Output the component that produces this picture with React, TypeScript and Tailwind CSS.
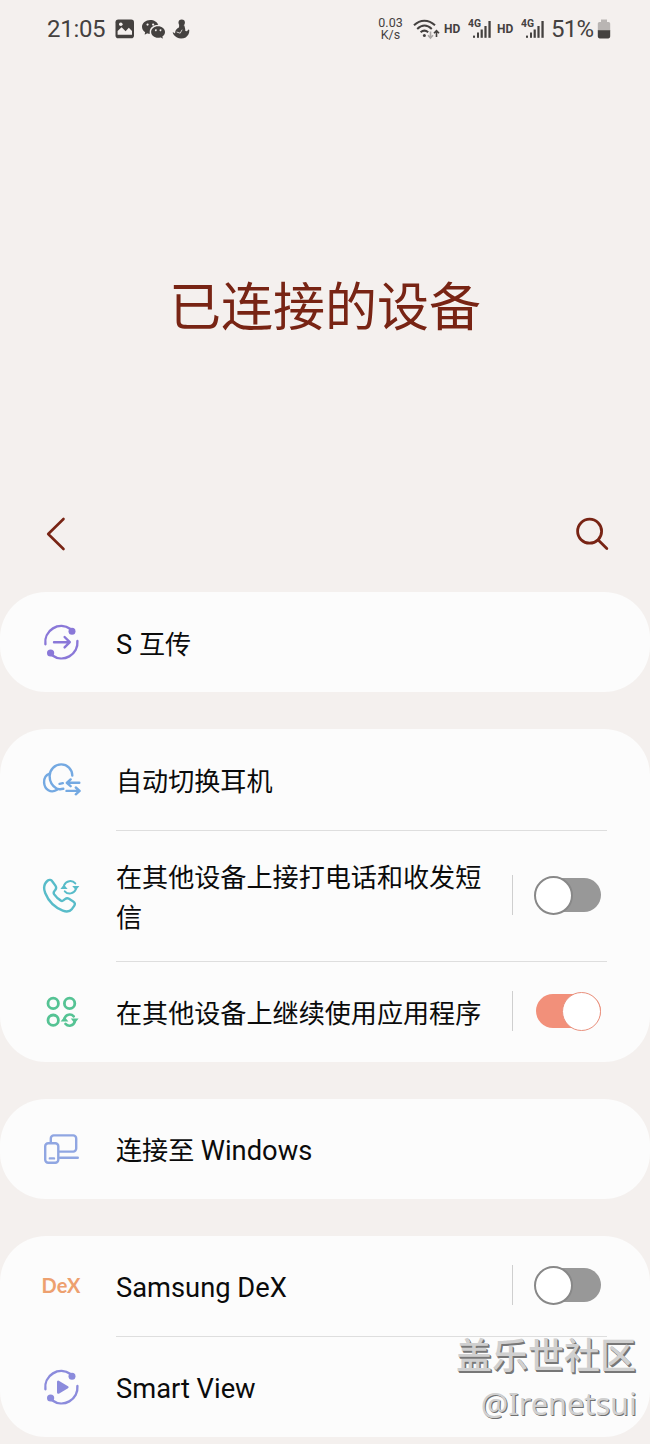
import type { ReactNode } from "react";
import { BsWechat } from "react-icons/bs";

function Icon({ color, children }: { color: string; children: ReactNode }) {
  return (
    <svg
      viewBox="0 0 40 40"
      className={`size-10 shrink-0 ${color}`}
      fill="none"
      stroke="currentColor"
      strokeWidth="2.4"
      strokeLinecap="round"
      strokeLinejoin="round"
    >
      {children}
    </svg>
  );
}

function Orbit() {
  return (
    <>
      <path d="M4.4 22.2A16 16 0 0 1 29.5 7" />
      <path d="M36.4 19A16 16 0 0 1 11 33.3" />
      <circle cx="31" cy="9.2" r="3.5" fill="currentColor" stroke="none" />
      <circle cx="9.6" cy="31" r="3.6" fill="currentColor" stroke="none" />
    </>
  );
}

const icons = {
  share: (
    <Icon color="text-[#8a78d8]">
      <Orbit />
      <path d="M13 20.2h15.5M23.6 15l5.2 5.2-5.2 5.2" />
    </Icon>
  ),
  buds: (
    <Icon color="text-[#74a9e2]">
      <path d="M31.3 15.6C31.2 9 26.3 4.4 20.2 4.4C13.8 4.4 8.6 9.6 8.6 16C8.6 21.5 11.5 26 15.5 28.6C17.6 29.9 20 29 22.3 28.8" />
      <path d="M8.6 13.6C4.8 15 2.9 18.7 3.1 22.5C3.5 29.5 9.8 33.8 16 29.8" />
      <path d="M18.6 23.9l3.2-.8M38.3 22.8H26M29.6 19.4l-3.8 3.4 3.8 3.4M25.5 30.9h12.8M34.8 27.5l3.8 3.4-3.8 3.4" />
    </Icon>
  ),
  call: (
    <Icon color="text-[#58bcc9]">
      <path d="M6.8 4.5C8.2 3.4 10.2 3.7 11.2 5.2L14.4 9.6C15.4 11 15.3 12.5 14.4 13.8L13.2 15.4C12.4 16.6 12.5 17.4 13.2 18.4C15 21 16.8 22.7 19.6 24.4C20.6 25.1 21.5 25.1 22.4 24.4L24 23.1C25.2 22.2 26.6 22 28 22.8L32.2 25.4C34 26.5 34.3 28.4 33.2 29.9L31 32.9C28.8 35.7 25.4 36 21.8 34.6C14.2 31.6 7.4 25 4.2 17C2.5 12.7 2.8 7.8 6.8 4.5Z" />
      <path d="M23.2 9.2a6.6 6.6 0 0 1 11.1-1.8M34.8 13.4a6.6 6.6 0 0 1-11 1.9" strokeWidth="2" />
      <path d="M19.4 13l3.5-4.4 3.7 4.4zM31.2 9.9l3.7 4.4 3.5-4.4z" fill="currentColor" stroke="none" />
    </Icon>
  ),
  apps: (
    <Icon color="text-[#55c394]">
      <g strokeWidth="2.8">
        <circle cx="12.2" cy="11.4" r="5.2" />
        <circle cx="28.6" cy="11.4" r="5.2" />
        <circle cx="12.2" cy="28.2" r="5.2" />
        <path d="M23.5 26.4a5.4 5.4 0 0 1 9.2-2M33.7 29.9a5.4 5.4 0 0 1-9.2 2" strokeWidth="2.6" />
      </g>
      <path d="M19.6 29.6l3.9-4.8 3.9 4.8zM29.8 26.6l3.9 4.8 3.9-4.8z" fill="currentColor" stroke="none" />
    </Icon>
  ),
  windows: (
    <Icon color="text-[#90a6e2]">
      <path d="M9.8 13V9.4a3 3 0 0 1 3-3H32.2a3 3 0 0 1 3 3V19.6a3 3 0 0 1-3 3H18.6" />
      <rect x="4.2" y="14.3" width="13.1" height="19.4" rx="3" />
      <path d="M8.8 29.4h4.2M19 28.8h17.8" />
    </Icon>
  ),
  dex: (
    <span className="mb-0.5 w-10 shrink-0 text-center font-['Lato'] text-[20px] leading-none font-bold text-[#eda06f]">
      DeX
    </span>
  ),
  view: (
    <Icon color="text-[#8b8bdc]">
      <Orbit />
      <path d="M17.2 14.8v10.8l9.2-5.4z" fill="currentColor" />
    </Icon>
  ),
};

function Toggle({ on = false }: { on?: boolean }) {
  return (
    <div className="mb-0.5 flex h-10 shrink-0 items-center border-l border-[#cfcfcf] pl-[22px]">
      <div
        className={`flex h-[34px] items-center rounded-full ${
          on ? "ml-px w-[65px] justify-end bg-[#f2907a]" : "w-[66px] bg-[#989898]"
        }`}
      >
        <div
          className={`size-[39px] shrink-0 rounded-full bg-white ${
            on ? "border-[1.5px] border-[#e9907d]" : "-ml-px border-2 border-[#888]"
          }`}
        />
      </div>
    </div>
  );
}

type RowProps = {
  icon: ReactNode;
  label: string;
  height: string;
  toggle?: "on" | "off";
};

// Latin words are set slightly larger than the Chinese characters beside them
function Label({ text }: { text: string }) {
  return text.split(/([A-Za-z][A-Za-z ]*)/).map((part, i) =>
    /[A-Za-z]/.test(part) ? (
      <span key={i} className="text-[27.3px]">
        {part}
      </span>
    ) : (
      part
    )
  );
}

function Row({ icon, label, height, toggle }: RowProps) {
  return (
    <div className={`flex items-center pr-12 pl-[41px] ${height}`}>
      {icon}
      <div
        className={`ml-[35px] w-[372px] text-[26.1px] leading-[40px] text-[#0b0b0b] ${
          /^(S |自动)/.test(label) ? "mt-[5px]" : "mt-[3px]"
        }`}
      >
        <Label text={label} />
      </div>
      {toggle && (
        <div className="ml-6">
          <Toggle on={toggle === "on"} />
        </div>
      )}
    </div>
  );
}

function Card({ children }: { children: ReactNode }) {
  return <section className="rounded-[46px] bg-[#fcfcfc]">{children}</section>;
}

function Divider() {
  return <div className="mr-[43px] ml-[116px] h-px bg-[#dedede]" />;
}

function Signal() {
  return (
    <svg viewBox="0 0 25 22" className="h-[22px] w-[25px]" fill="#44413f">
      <text x="0" y="9" fontSize="11" fontWeight="700" textLength="13" lengthAdjust="spacingAndGlyphs">
        4G
      </text>
      <rect x="5" y="17.6" width="2" height="2.2" />
      <rect x="9" y="14.5" width="2" height="5.3" />
      <rect x="12.6" y="11.5" width="2.2" height="8.3" />
      <rect x="16.4" y="8" width="2.2" height="11.8" />
      <rect x="20.4" y="3" width="2.3" height="16.8" />
    </svg>
  );
}

function StatusBar() {
  return (
    <header className="flex h-[57px] items-center pr-[39px] pl-[47px] text-[#44413f]">
      <span className="w-[59px] text-[24px] leading-none tracking-[-0.3px]">21:05</span>
      <svg viewBox="0 0 20 20" className="ml-[9px] size-[20px]">
        <rect x="0.5" y="0.5" width="18.5" height="18.7" rx="2.8" fill="currentColor" />
        <path d="M2.6 15.8V12l4-3.8 4 4 3.2-3.4 3.2 3.2v3.8z" fill="#f4f0ee" />
        <circle cx="5.8" cy="5.3" r="1.8" fill="#f4f0ee" />
      </svg>
      <BsWechat className="ml-[7px] size-[23px]" />
      <svg viewBox="0 0 18 20" className="ml-[7px] h-5 w-[18px]" fill="currentColor">
        <circle cx="9.7" cy="3.6" r="3.2" />
        <path d="M7.2 5.4l5 .8c.7 2.1 1.2 3.9 1.1 5.7l1.7.4 1.4-1.8.9.6c.2 3.5-1.4 6-3.6 7.3-2.7 1.4-6.3 1.4-8.7.1C2.4 17.2.8 15.2.7 13.1l2.4 1.5C3 10.9 5.1 9.3 7 8.4z" />
        <path d="M4.6 13l3.6 1.2 1.9-3.5" fill="none" stroke="#f4f0ee" strokeWidth="0.8" />
      </svg>

      <div className="ml-auto flex items-center">
        <div className="flex w-[27px] flex-col items-center text-[12.5px] leading-[12px]">
          <span>0.03</span>
          <span>K/s</span>
        </div>
        <svg viewBox="0 0 27 22" className="ml-[9px] h-[22px] w-[27px]" fill="none" stroke="currentColor" strokeWidth="2">
          <path d="M1 7.3C7.2 1.2 15.5 1.2 22 7.3M4.2 10.9C9 6.4 14 6.4 18.8 10.9M7.6 14.3c2.6-2.3 5-2.3 7.6 0" />
          <circle cx="11.4" cy="17.6" r="1.5" fill="currentColor" stroke="none" />
          <path d="M17.5 13.5v6M15 17.3l2.5 2.7 2.5-2.7" stroke="#aaa6a4" strokeWidth="1.6" />
          <path d="M23.5 19v-6M21 15.3l2.5-2.7 2.5 2.7" strokeWidth="1.6" />
        </svg>
        <span className="ml-[4px] w-[17px] text-[12px] leading-none font-bold">HD</span>
        <div className="ml-[7px]">
          <Signal />
        </div>
        <span className="ml-[4px] w-[17px] text-[12px] leading-none font-bold">HD</span>
        <div className="ml-[7px]">
          <Signal />
        </div>
        <span className="ml-[5px] w-[44px] text-[24px] leading-none tracking-[-0.8px]">51%</span>
        <svg viewBox="0 0 14 20" className="ml-[2px] h-5 w-[14px]">
          <path d="M4 .5h6V3h1.6a1.6 1.6 0 0 1 1.6 1.6V12H.8V4.6A1.6 1.6 0 0 1 2.4 3H4z" fill="#b9b5b3" />
          <path d="M.8 11.3h12.4v6.3a1.8 1.8 0 0 1-1.8 1.8H2.6a1.8 1.8 0 0 1-1.8-1.8z" fill="currentColor" />
        </svg>
      </div>
    </header>
  );
}

export default function App() {
  return (
    <div
      lang="zh-CN"
      className="relative h-[1444px] w-[650px] overflow-hidden bg-[#f4f0ee] font-['Roboto','Noto_Sans_CJK_SC',sans-serif]"
    >
      <StatusBar />

      <div className="flex h-[427px] items-center justify-center">
        <h1 className="mt-[76px] text-[52px] leading-none text-[#782414]">已连接的设备</h1>
      </div>

      <nav className="flex h-[108px] items-center justify-between pr-[41px] pl-[46px] text-[#782414]">
        <svg viewBox="0 0 20 34" className="mb-[8px] h-[34px] w-5" fill="none" stroke="currentColor" strokeWidth="2.6" strokeLinecap="round" strokeLinejoin="round">
          <path d="M17.5 2L2.2 17l15.3 15" />
        </svg>
        <svg viewBox="0 0 34 34" className="mb-[8px] size-[34px]" fill="none" stroke="currentColor" strokeWidth="2.8" strokeLinecap="round">
          <circle cx="14.6" cy="14.2" r="12" />
          <path d="M23.2 23l8.6 8.4" />
        </svg>
      </nav>

      <main className="flex flex-col gap-[37px]">
        <Card>
          <Row icon={icons.share} label="S 互传" height="h-[100px]" />
        </Card>
        <Card>
          <Row icon={icons.buds} label="自动切换耳机" height="h-[101px]" />
          <Divider />
          <Row icon={icons.call} label="在其他设备上接打电话和收发短信" height="h-[130px]" toggle="off" />
          <Divider />
          <Row icon={icons.apps} label="在其他设备上继续使用应用程序" height="h-[100px]" toggle="on" />
        </Card>
        <Card>
          <Row icon={icons.windows} label="连接至 Windows" height="h-[100px]" />
        </Card>
        <Card>
          <Row icon={icons.dex} label="Samsung DeX" height="h-[100px]" toggle="off" />
          <Divider />
          <Row icon={icons.view} label="Smart View" height="h-[100px]" />
        </Card>
      </main>

      <div className="absolute right-[13px] bottom-[21px] flex flex-col items-end font-['Noto_Sans','Noto_Sans_CJK_SC',sans-serif] text-[#d0d0d0]">
        <span className="mr-px text-[36px] leading-[44px] font-medium [text-shadow:1px_1px_0_#777,1.5px_1.5px_0_#777]">
          盖乐世社区
        </span>
        <span className="mt-[5px] text-[30.7px] leading-[40px] [text-shadow:1px_1px_0_#707070]">@Irenetsui</span>
      </div>
    </div>
  );
}
